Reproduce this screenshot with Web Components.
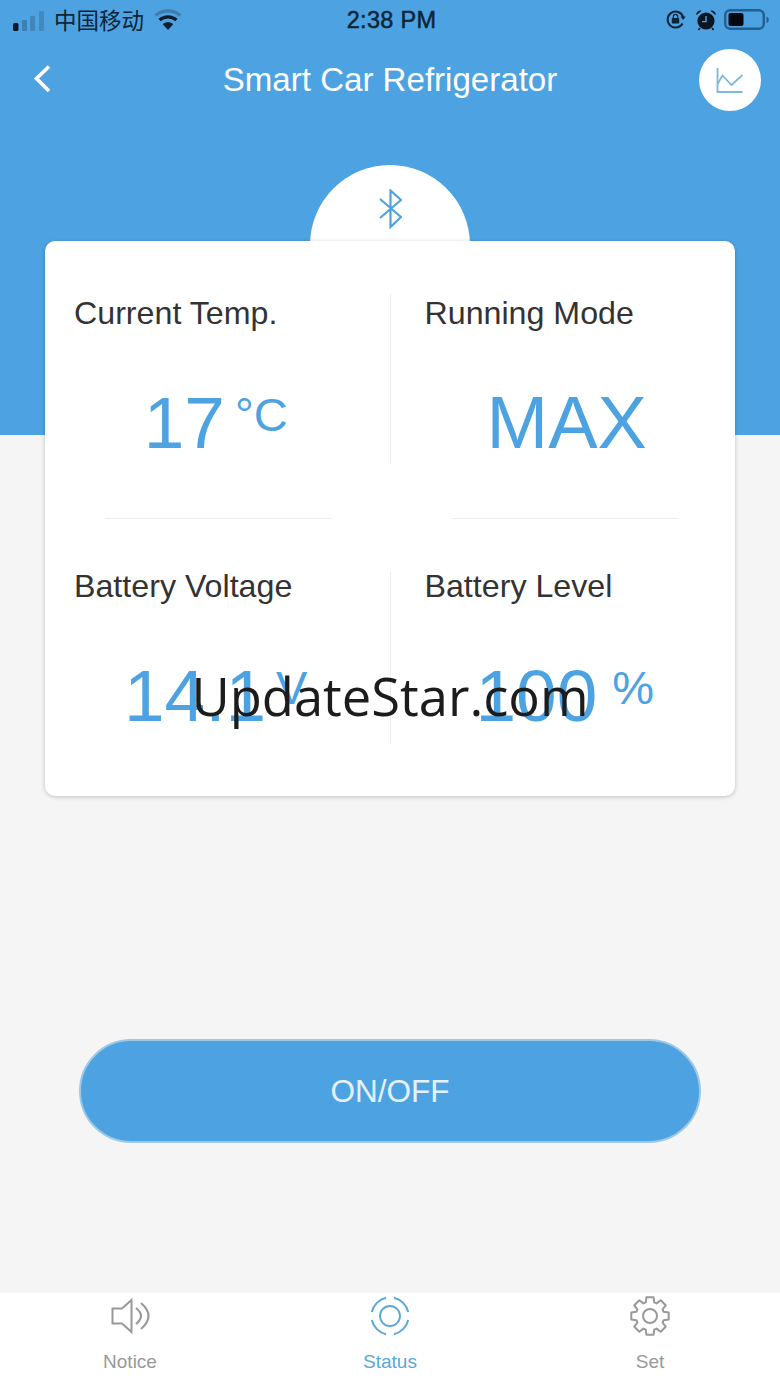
<!DOCTYPE html>
<html>
<head>
<meta charset="utf-8">
<title>Smart Car Refrigerator</title>
<style>
    html, body { margin: 0; padding: 0; background: #f5f5f5; }
    body { font-family: "Liberation Sans", Arial, sans-serif; }
</style>
</head>
<body>
<app-shell>
    <status-bar slot="hero" carrier="中国移动" time="2:38 PM"></status-bar>
    <nav-bar slot="hero">Smart Car Refrigerator</nav-bar>
    <stat-card slot="card">
        <stat-cell slot="a"><span slot="label">Current Temp.</span><span slot="value">17</span><span slot="unit">°C</span></stat-cell>
        <stat-cell slot="b" class="right"><span slot="label">Running Mode</span><span slot="value" class="wide">MAX</span></stat-cell>
        <stat-cell slot="c"><span slot="label">Battery Voltage</span><span slot="value">14.1</span><span slot="unit">V</span></stat-cell>
        <stat-cell slot="d" class="right" style="--gap:15px; --shift:-30px"><span slot="label">Battery Level</span><span slot="value">100</span><span slot="unit">%</span></stat-cell>
    </stat-card>
    <power-button slot="action">ON/OFF</power-button>
    <tab-bar slot="tabs">
        <tab-item icon="notice">Notice</tab-item>
        <tab-item icon="status" active>Status</tab-item>
        <tab-item icon="set">Set</tab-item>
    </tab-bar>
    <water-mark slot="mark">UpdateStar.com</water-mark>
</app-shell>

<script>
class AppShell extends HTMLElement {
    constructor() {
        super();
        this.attachShadow({ mode: "open" });
        this.shadowRoot.innerHTML = `
        <style>
        :host { display: flex; flex-direction: column; position: relative; width: 780px; height: 1387px; overflow: hidden; background: #f5f5f5; }
        .hero { height: 435px; background: #4da3e2; flex: none; }
        .card { margin-top: -194px; padding: 0 45px; position: relative; flex: none; }
        .action { flex: 1; display: flex; align-items: flex-start; justify-content: center; padding-top: 243px; }
        .mark { position: absolute; left: 0; right: 0; top: 660px; display: flex; justify-content: center; }
        </style>
        <div class="hero"><slot name="hero"></slot></div>
        <div class="card"><slot name="card"></slot></div>
        <div class="action"><slot name="action"></slot></div>
        <slot name="tabs"></slot>
        <div class="mark"><slot name="mark"></slot></div>
        `;
    }
}

class StatusBar extends HTMLElement {
    constructor() {
        super();
        this.attachShadow({ mode: "open" });
    }
    connectedCallback() {
        this.shadowRoot.innerHTML = `
        <style>
        :host { display: grid; grid-template-columns: 1fr auto 1fr; align-items: center; height: 40px; padding: 0 10px 0 13px; color: #0c2438; }
        .left, .right { display: flex; align-items: center; }
        .right { justify-content: flex-end; }
        .carrier { font: 22.5px "Noto Sans CJK SC", "Liberation Sans", sans-serif; margin: -2px 9px 0 9px; line-height: 40px; }
        .time { font: 23.5px "Liberation Sans", Arial, sans-serif; -webkit-text-stroke: 0.5px #0c2438; letter-spacing: 0.3px; }
        svg { display: block; }
        </style>
        <div class="left">
            <svg width="32" height="24" viewBox="0 0 32 24">
                <rect x="0" y="15" width="5.5" height="8" rx="1.5" fill="#0a1a2a"/>
                <rect x="9" y="12" width="5" height="11" rx="1" fill="#3a7fb5"/>
                <rect x="17" y="8" width="5" height="15" rx="1" fill="#3f86bd"/>
                <rect x="26" y="3" width="5" height="20" rx="1" fill="#4489be"/>
            </svg>
            <span class="carrier">${this.getAttribute("carrier")}</span>
            <svg width="28" height="24" viewBox="0 0 28 24" style="margin-left:1px">
                <path d="M1.5 7.5 C8.5 1.5 19.5 1.5 26.5 7.5" fill="none" stroke="#3f7fb0" stroke-width="3.4"/>
                <path d="M5.5 12 C10.5 7.8 17.5 7.8 22.5 12" fill="none" stroke="#0c1e30" stroke-width="3.2"/>
                <path d="M14 22 L8.8 16.2 C11.6 13.6 16.4 13.6 19.2 16.2 Z" fill="#0c1e30"/>
            </svg>
        </div>
        <div class="time">${this.getAttribute("time")}</div>
        <div class="right">
            <svg width="22" height="22" viewBox="0 0 22 22" style="margin-right:8px">
                <path d="M17.6 14.5 A8 8 0 1 1 18.2 8" fill="none" stroke="#0c2438" stroke-width="2"/>
                <path d="M15.4 7.4 L20.6 7.4 L18.2 11 Z" fill="#0c2438"/>
                <rect x="6.8" y="9" width="7.4" height="5.6" rx="0.8" fill="#0c2438"/>
                <path d="M8.3 9 V7.6 a2.2 2.2 0 0 1 4.4 0 V9" fill="none" stroke="#0c2438" stroke-width="1.2"/>
            </svg>
            <svg width="22" height="22" viewBox="0 0 22 22" style="margin-right:7px">
                <circle cx="11" cy="12" r="8.6" fill="#0a1622"/>
                <path d="M1.4 6.2 A4 4 0 0 1 6.6 1.8 Z M20.6 6.2 A4 4 0 0 0 15.4 1.8 Z" fill="#0a1622"/>
                <path d="M5 19 L3.4 21 M17 19 L18.6 21" stroke="#0a1622" stroke-width="1.6"/>
                <path d="M11 7 V12.6 H7" fill="none" stroke="#4da3e2" stroke-width="1.4"/>
            </svg>
            <svg width="46" height="22" viewBox="0 0 46 22">
                <rect x="1.2" y="1.2" width="38.6" height="18.6" rx="5" fill="none" stroke="#23608f" stroke-width="2.4"/>
                <rect x="4.5" y="4" width="15" height="13" rx="2" fill="#05090d"/>
                <path d="M42.5 7.5 A3.4 3.4 0 0 1 42.5 14 Z" fill="#23608f"/>
            </svg>
        </div>
        `;
    }
}

class NavBar extends HTMLElement {
    constructor() {
        super();
        this.attachShadow({ mode: "open" });
        this.shadowRoot.innerHTML = `
        <style>
        :host { display: grid; grid-template-columns: 1fr auto 1fr; align-items: center; height: 62px; margin-top: 9px; padding: 0 19px; color: #fff; font-size: 33.1px; }
        .back { margin: -2px 0 0 13px; }
        .chart { justify-self: end; width: 62px; height: 62px; border-radius: 50%; background: #fff; display: flex; align-items: center; justify-content: center; }
        svg { display: block; }
        </style>
        <svg class="back" width="22" height="32" viewBox="0 0 22 32">
            <path d="M17 3.5 L4.5 15.5 L17 28" fill="none" stroke="#fff" stroke-width="3.6"/>
        </svg>
        <div class="title"><slot></slot></div>
        <div class="chart">
            <svg width="28" height="27" viewBox="0 0 28 27">
                <path d="M1.5 1 V25 H26.5" fill="none" stroke="#7db8dc" stroke-width="1.8"/>
                <path d="M1.5 17 L6.5 8.5 L15.5 18 L26.5 8" fill="none" stroke="#7db8dc" stroke-width="1.8"/>
            </svg>
        </div>
        `;
    }
}

class StatCard extends HTMLElement {
    constructor() {
        super();
        this.attachShadow({ mode: "open" });
        this.shadowRoot.innerHTML = `
        <style>
        :host { display: block; position: relative; }
        .bump { position: absolute; left: 265px; top: -76px; width: 160px; height: 160px; border-radius: 50%; background: #fff; display: flex; justify-content: center; padding-top: 24px; box-sizing: border-box; }
        .panel { position: relative; background: #fff; border-radius: 10px; box-shadow: 0 1px 4px rgba(0,0,0,.22); padding: 53px 0 52px; display: grid; grid-template-columns: 1fr 1px 1fr; grid-template-rows: 170px 103px 177px; height: 555px; box-sizing: border-box; }
        .v { background: #ececec; }
        .v.low { margin-top: 5px; }
        .h { height: 1px; background: #efefef; margin-top: 54px; }
        .h.l { margin-left: 60px; margin-right: 58px; }
        .h.r { margin-left: 60px; margin-right: 57px; }
        svg { display: block; }
        </style>
        <div class="bump">
            <svg width="24" height="40" viewBox="0 0 24 40">
                <path d="M2 10 L23 28 L12.5 38 V1.5 L23 11 L2 29" fill="none" stroke="#4da3e2" stroke-width="2.2"/>
            </svg>
        </div>
        <div class="panel">
            <slot name="a"></slot>
            <div class="v"></div>
            <slot name="b"></slot>
            <div class="h l"></div>
            <div></div>
            <div class="h r"></div>
            <slot name="c"></slot>
            <div class="v low"></div>
            <slot name="d"></slot>
        </div>
        `;
    }
}

class StatCell extends HTMLElement {
    constructor() {
        super();
        this.attachShadow({ mode: "open" });
        this.shadowRoot.innerHTML = `
        <style>
        :host { display: flex; flex-direction: column; padding-left: 29px; color: #333; }
        :host(.right) { padding-left: 34px; }
        .label { font-size: 32.2px; line-height: 38px; }
        .reading { display: flex; justify-content: center; align-items: flex-start; gap: var(--gap, 10px); color: #4da3e2; margin-top: 53px; margin-left: var(--shift, -32px); }
        :host(.right) .reading { margin-left: var(--shift, -26px); }
        .value { font-size: 73px; line-height: 76px; }
        ::slotted(.wide) { font-size: 74px; }
        .unit { font-size: 47px; line-height: 48px; margin-top: 6px; }
        .unit.none { display: none; }
        </style>
        <div class="label"><slot name="label"></slot></div>
        <div class="reading">
            <div class="value"><slot name="value"></slot></div>
            <div class="unit"><slot name="unit"></slot></div>
        </div>
        `;
    }
    connectedCallback() {
        // MAX has no unit, drop the box so it centers on its own
        if (!this.querySelector("[slot=unit]")) {
            this.shadowRoot.querySelector(".unit").classList.add("none");
        }
    }
}

class PowerButton extends HTMLElement {
    constructor() {
        super();
        this.attachShadow({ mode: "open" });
        this.shadowRoot.innerHTML = `
        <style>
        :host { display: flex; align-items: center; justify-content: center; width: 622px; height: 104px; box-sizing: border-box; border-radius: 52px; background: #4da3e2; border: 2px solid #9fc8e6; color: #e4f1fb; font-size: 31.5px; }
        </style>
        <slot></slot>
        `;
    }
}

class TabBar extends HTMLElement {
    constructor() {
        super();
        this.attachShadow({ mode: "open" });
        this.shadowRoot.innerHTML = `
        <style>
        :host { display: grid; grid-template-columns: repeat(3, 1fr); height: 94px; background: #fff; flex: none; }
        </style>
        <slot></slot>
        `;
    }
}

class TabItem extends HTMLElement {
    constructor() {
        super();
        this.attachShadow({ mode: "open" });
    }
    gearPath() {
        // 8 teeth, outer radius 19, root radius 14.2
        let pts = [];
        for (let i = 0; i < 8; i++) {
            let a = i * Math.PI / 4 - Math.PI / 2;
            [[-0.3, 14.2], [-0.19, 19], [0.19, 19], [0.3, 14.2]].forEach(([d, r]) => {
                pts.push((20 + r * Math.cos(a + d)).toFixed(1) + " " + (20 + r * Math.sin(a + d)).toFixed(1));
            });
        }
        return "M" + pts.join(" L") + " Z";
    }
    iconMarkup(name) {
        if (name === "notice") {
            return `<path d="M2.5 12.5 H12 L21.5 4 V36 L12 27.5 H2.5 Z" fill="none" stroke="currentColor" stroke-width="2"/>
                <path d="M26 12 Q36 20 26 28" fill="none" stroke="currentColor" stroke-width="2.2"/>
                <path d="M31 7 Q46 20 31 33" fill="none" stroke="currentColor" stroke-width="2.2"/>`;
        }
        if (name === "status") {
            return `<circle cx="20" cy="20" r="10" fill="none" stroke="currentColor" stroke-width="1.8"/>
                <circle cx="20" cy="20" r="18.6" fill="none" stroke="currentColor" stroke-width="2" pathLength="100" stroke-dasharray="18 7" stroke-dashoffset="-3.5"/>`;
        }
        return `<path d="${this.gearPath()}" fill="none" stroke="currentColor" stroke-width="2" stroke-linejoin="round"/>
            <circle cx="20" cy="20" r="7" fill="none" stroke="currentColor" stroke-width="2"/>`;
    }
    connectedCallback() {
        this.shadowRoot.innerHTML = `
        <style>
        :host { display: flex; flex-direction: column; align-items: center; color: #999; font-size: 19px; padding-top: 3px; }
        :host([active]) { color: #58a8dc; }
        svg { display: block; }
        .name { margin-top: 15px; line-height: 22px; }
        </style>
        <svg width="40" height="40" viewBox="0 0 40 40">${this.iconMarkup(this.getAttribute("icon"))}</svg>
        <div class="name"><slot></slot></div>
        `;
    }
}

class WaterMark extends HTMLElement {
    constructor() {
        super();
        this.attachShadow({ mode: "open" });
        this.shadowRoot.innerHTML = `
        <style>
        :host { display: block; font-family: "Open Sans", sans-serif; font-size: 52.5px; line-height: 72px; color: #1c1c1c; }
        </style>
        <slot></slot>
        `;
    }
}

customElements.define("app-shell", AppShell);
customElements.define("status-bar", StatusBar);
customElements.define("nav-bar", NavBar);
customElements.define("stat-card", StatCard);
customElements.define("stat-cell", StatCell);
customElements.define("power-button", PowerButton);
customElements.define("tab-bar", TabBar);
customElements.define("tab-item", TabItem);
customElements.define("water-mark", WaterMark);
</script>
</body>
</html>
